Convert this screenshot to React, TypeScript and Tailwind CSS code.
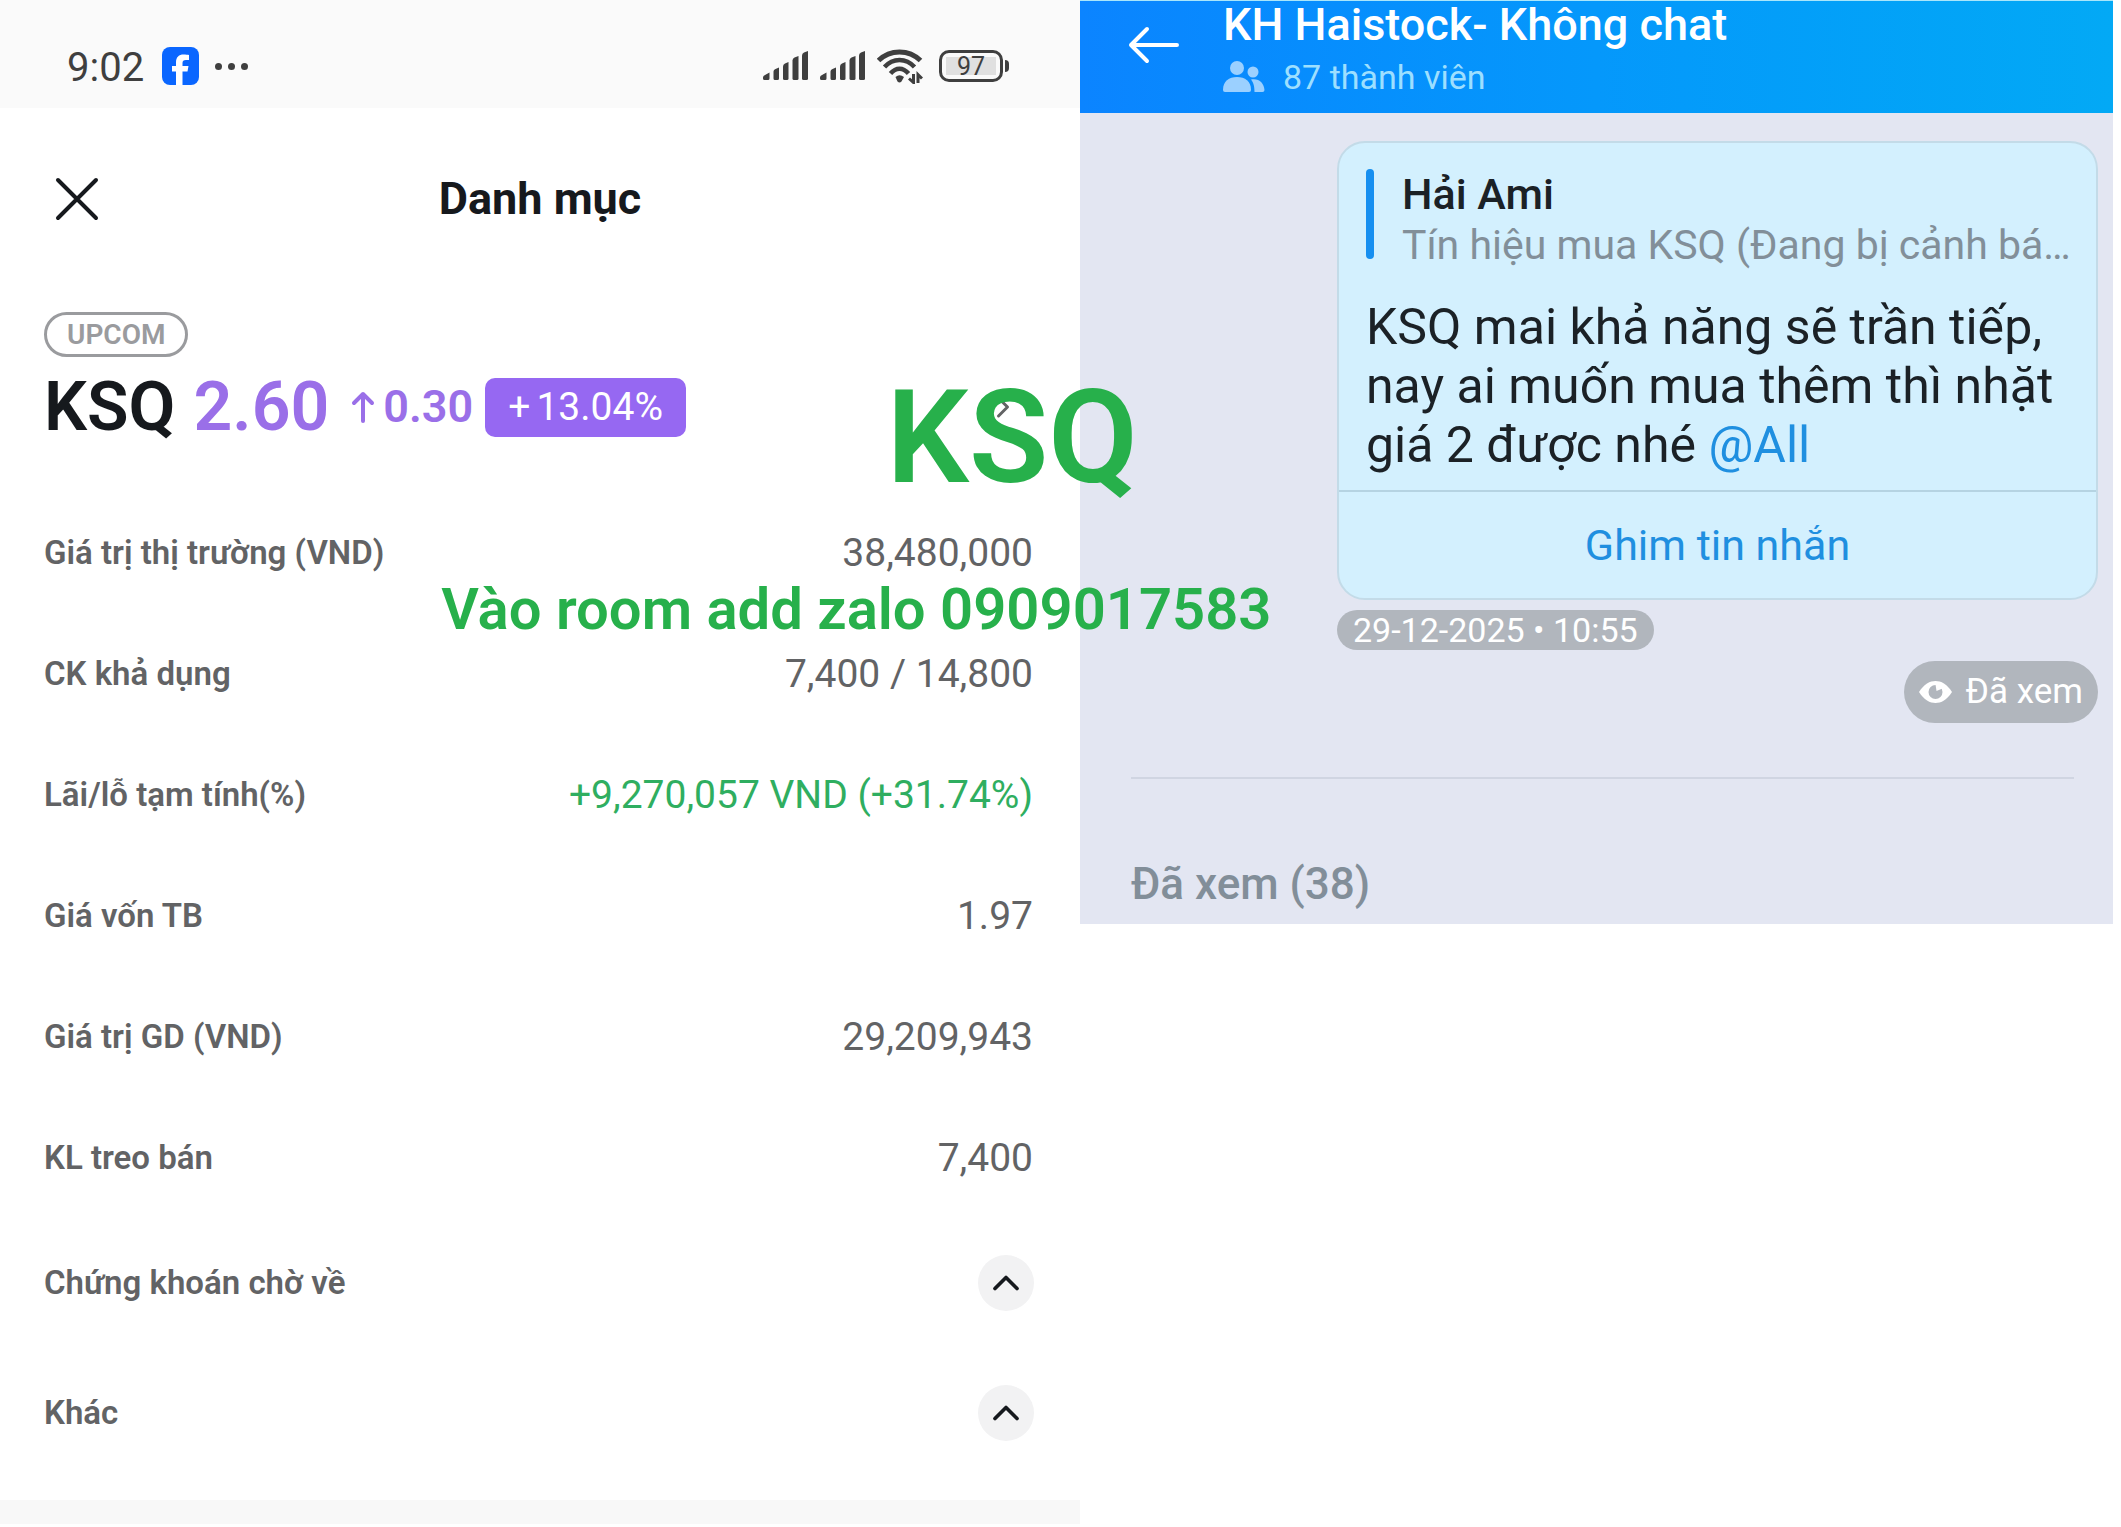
import React from "react";
import { ChevronRight, ChevronUp } from "lucide-react";

type Row = { label: string; value: string; gain?: boolean };

const rows: Row[] = [
  { label: "Giá trị thị trường (VND)", value: "38,480,000" },
  { label: "CK khả dụng", value: "7,400 / 14,800" },
  { label: "Lãi/lỗ tạm tính(%)", value: "+9,270,057 VND (+31.74%)", gain: true },
  { label: "Giá vốn TB", value: "1.97" },
  { label: "Giá trị GD (VND)", value: "29,209,943" },
  { label: "KL treo bán", value: "7,400" },
];

function SignalBars() {
  return (
    <svg width="45" height="30" viewBox="0 0 45 30" fill="#3f3f3f" aria-hidden="true">
      <path d="M0 26.5Q0 24.500 2 24L6.500 21.500V27.500Q6.500 29 5 29H1.500Q0 29 0 27.500Z" />
      <path d="M10.500 20.500Q10.500 18.500 12.500 18L16 16.500V27.500Q16 29 14.500 29H12Q10.500 29 10.500 27.500Z" />
      <path d="M20 15.500Q20 13.500 22 12.500L25.500 11V27.500Q25.500 29 24 29H21.500Q20 29 20 27.500Z" />
      <path d="M29.500 9.500Q29.500 7.500 31.500 6.500L35.500 5V27.500Q35.500 29 34 29H31Q29.500 29 29.500 27.500Z" />
      <path d="M39 4.500Q39 2.500 41 1.500L45 0V27.500Q45 29 43.500 29H40.500Q39 29 39 27.500Z" />
    </svg>
  );
}

function WifiIcon() {
  return (
    <svg width="46" height="36" viewBox="0 0 46 36" fill="none" stroke="#3f3f3f" aria-hidden="true">
      <path d="M1.500 12.500C13 1 32 1 43.500 12.500" strokeWidth="5" />
      <path d="M7.500 19C16 9.500 29 9.500 37.500 19" strokeWidth="4.500" />
      <path d="M13.500 25.500C19 19 26 19 31.500 25.500" strokeWidth="4.500" />
      <path d="M18.500 29Q22.500 25.500 27 29L24.500 33.500Q22.500 35.500 20.500 33.500Z" fill="#3f3f3f" stroke="none" />
      <path d="M36.500 26V34.500L32 30.500M41 35V26.500L45 30.500" strokeWidth="3" />
    </svg>
  );
}

function BatteryIcon() {
  return (
    <div className="ml-1 flex items-center gap-0.5">
      <div className="h-8 w-16 rounded-[10px] border-3 border-[#3f3f3f] p-1">
        <div className="flex h-full items-center justify-center bg-[#e0e0e0] text-[25px] leading-none text-[#3f3f3f]">
          97
        </div>
      </div>
      <div className="h-3 w-1 rounded-r bg-[#3f3f3f]" />
    </div>
  );
}

function FacebookIcon() {
  return (
    <svg width="37" height="38" viewBox="0 0 37 38" aria-hidden="true">
      <rect width="37" height="38" rx="8" fill="#0a66ff" />
      <path
        d="M14 38V24.500H10V19H14V15.500C14 10 17 7.500 21.500 7.500C23.500 7.500 26 7.700 27 8V13H24C21.500 13 20.500 14 20.500 16V19H26.500L25.500 24.500H20.500V38Z"
        fill="#fff"
      />
    </svg>
  );
}

function StatusBar() {
  return (
    <div className="flex h-[108px] items-center bg-[#fafafa] pt-6 pr-[71px] pl-[67px] text-[#3f3f3f]">
      <span className="pt-1 text-[40px] leading-none">9:02</span>
      <span className="ml-[18px]">
        <FacebookIcon />
      </span>
      <span className="ml-4 flex gap-1.5">
        <i className="size-[7px] rounded-full bg-current" />
        <i className="size-[7px] rounded-full bg-current" />
        <i className="size-[7px] rounded-full bg-current" />
      </span>
      <div className="ml-auto flex items-center gap-3">
        <SignalBars />
        <SignalBars />
        <WifiIcon />
        <BatteryIcon />
      </div>
    </div>
  );
}

function Portfolio() {
  return (
    <section className="flex flex-col text-[#626365]">
      <StatusBar />
      <header className="grid h-[182px] grid-cols-[1fr_auto_1fr] items-center px-[55px]">
        <button type="button" aria-label="Đóng" className="justify-self-start text-[#16191d]">
          <svg width="44" height="44" viewBox="0 0 44 44" stroke="currentColor" strokeWidth="4" strokeLinecap="round" aria-hidden="true">
            <path d="M3 3L41 41M41 3L3 41" />
          </svg>
        </button>
        <h1 className="text-[45px] font-bold text-[#16191d]">Danh mục</h1>
      </header>

      <div className="pr-[59px] pl-11">
        <div className="mt-[22px] flex">
          <span className="flex h-[45px] items-center rounded-full border-3 border-[#9a9b9e] px-5 text-[28px] font-semibold">
            <span className="text-[#9a9b9e]">UPCOM</span>
          </span>
        </div>
        <div className="mt-3 flex h-[76px] items-center">
          <span className="text-[68px] font-semibold text-[#16191d]">KSQ</span>
          <span className="ml-[18px] text-[68px] font-semibold text-[#9a6fe8]">2.60</span>
          <svg className="ml-[22px]" width="24" height="32" viewBox="0 0 24 32" fill="none" stroke="#9a6fe8" strokeWidth="4" strokeLinecap="round" strokeLinejoin="round" aria-hidden="true">
            <path d="M12 30V3M3 12L12 3L21 12" />
          </svg>
          <span className="ml-2 text-[45px] font-semibold text-[#9a6fe8]">0.30</span>
          <span className="ml-3 flex h-[59px] items-center gap-1.5 rounded-[10px] bg-[#9668f2] px-[23px] text-[39px] text-white">
            <span>+</span>
            <span>13.04%</span>
          </span>
          <ChevronRight size={36} className="ml-auto" />
        </div>
      </div>

      <dl className="mt-[47px] pr-[47px] pl-11">
        {rows.map((row) => (
          <div key={row.label} className="flex h-[121px] items-center justify-between">
            <dt className="text-[33px] font-semibold">{row.label}</dt>
            <dd className={row.gain ? "pt-0.5 text-[39px] text-[#2fae60]" : "pt-0.5 text-[39px]"}>{row.value}</dd>
          </div>
        ))}
      </dl>
      <div className="pr-[46px] pl-11">
        {["Chứng khoán chờ về", "Khác"].map((label) => (
          <div key={label} className="flex h-[130px] items-center justify-between text-[33px] font-semibold">
            <span>{label}</span>
            <button type="button" aria-label={label} className="flex size-14 items-center justify-center rounded-full bg-[#f2f2f3] text-[#16191d]">
              <ChevronUp size={44} strokeWidth={2} />
            </button>
          </div>
        ))}
      </div>
      <div className="mt-[22px] h-6 bg-[#f8f8f8]" />
    </section>
  );
}

function Chat() {
  return (
    <section className="flex h-[924px] flex-col bg-[#e3e6f2]">
      <header className="flex h-[113px] shrink-0 border-t border-[#a9e6fb] bg-linear-to-r from-[#0b84ff] via-[#0598fb] to-[#03a9f5] pl-12 text-white">
        <button type="button" aria-label="Quay lại" className="mt-6 h-10 shrink-0">
          <svg width="52" height="40" viewBox="0 0 52 40" fill="none" stroke="currentColor" strokeWidth="4" strokeLinecap="round" strokeLinejoin="round" aria-hidden="true">
            <path d="M49 20H3M19 4L3 20L19 36" />
          </svg>
        </button>
        <div className="ml-[43px]">
          <h2 className="text-[45px] leading-[48px] font-medium">KH Haistock- Không chat</h2>
          <p className="flex items-center gap-[18px] text-[34px] leading-[56px] text-[#9ddfff]">
            <svg width="42" height="32" viewBox="0 0 42 32" fill="#9bd0ff" aria-hidden="true">
              <circle cx="14" cy="7" r="7" />
              <path d="M0 29C0 20 6 16 14 16S28 20 28 29Q28 31 26 31H2Q0 31 0 29Z" />
              <circle cx="30" cy="11" r="5.500" />
              <path d="M28 18.500C36 17 41 22 41.500 29Q41.500 31 39.500 31H31.500C31.500 25 30.500 21.500 28 18.500Z" />
            </svg>
            87 thành viên
          </p>
        </div>
      </header>

      <div className="mt-7 mr-[15px] ml-[257px] rounded-[28px] border-2 border-[#c3dbe8] bg-[#d3f0fe] text-[#1b2126]">
        <div className="flex px-[27px] pt-[26px]">
          <div className="h-[90px] w-2 shrink-0 rounded-full bg-[#168ff0]" />
          <div className="ml-7 min-w-0">
            <p className="text-[43px] leading-[51px] font-medium">Hải Ami</p>
            <p className="text-[41px] leading-[51px] whitespace-nowrap text-[#828f99]">Tín hiệu mua KSQ (Đang bị cảnh bá…</p>
          </div>
        </div>
        <p className="mt-[27px] px-[27px] pb-[15px] text-[50px] leading-[59px]">
          KSQ mai khả năng sẽ trần tiếp, nay ai muốn mua thêm thì nhặt giá 2 được nhé{" "}
          <a href="#all" className="text-[#1f8fe0]">@All</a>
        </p>
        <button type="button" className="h-[108px] w-full border-t-2 border-[#b5d3e2] text-[43px] text-[#1f8fe0]">
          Ghim tin nhắn
        </button>
      </div>

      <div className="mt-[10px] ml-[257px] flex h-10 items-center self-start rounded-full bg-[#b1b6bd] px-4 text-[34px] text-white">
        29-12-2025 • 10:55
      </div>
      <div className="mt-[11px] mr-[15px] flex h-[62px] items-center gap-3.5 self-end rounded-full bg-[#b1b6bd] px-[15px] text-[35px] text-white">
        <svg width="33" height="22" viewBox="0 0 33 22" aria-hidden="true">
          <path d="M0 11C5 3 11 0 16.500 0S28 3 33 11C28 19 22 22 16.500 22S5 19 0 11Z" fill="#fff" />
          <circle cx="16.500" cy="11" r="7" fill="#b1b6bd" />
          <path d="M16.500 3.500L17.500 10L23.500 7.500A7.500 7.500 0 0 0 16.500 3.500Z" fill="#fff" />
        </svg>
        Đã xem
      </div>
      <hr className="mt-[54px] mr-[39px] ml-[51px] border-t-2 border-[#d0d5e2]" />
      <h3 className="mt-[77px] ml-[51px] text-[44px] leading-[56px] font-medium text-[#828e99]">Đã xem (38)</h3>
    </section>
  );
}

export default function App() {
  return (
    <main className="relative grid grid-cols-[minmax(0,1080fr)_minmax(0,1033fr)_minmax(0,8fr)] items-start bg-white font-['Roboto',sans-serif]">
      <Portfolio />
      <Chat />
      <p className="absolute top-[371px] left-[41.800%] text-[130px] leading-[134px] font-semibold text-[#27b04b]">KSQ</p>
      <p className="absolute top-[573px] left-[20.800%] text-[58px] leading-[72px] font-semibold whitespace-nowrap text-[#27b04b]">
        Vào room add zalo 0909017583
      </p>
    </main>
  );
}
